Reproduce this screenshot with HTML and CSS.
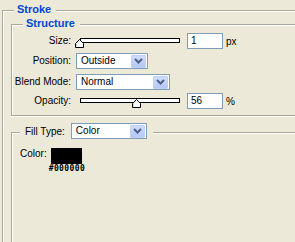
FILE: index.html
```html
<!DOCTYPE html>
<html>
<head>
<meta charset="utf-8">
<link rel="stylesheet" href="styles.css">
</head>
<body>
<div class="group outer">
  <div class="title bold">Stroke</div>
  <div class="group inner structure">
    <div class="title bold">Structure</div>
    <div class="rows">
      <div class="row row-size">
        <span class="lbl">Size:</span>
        <div class="slider">
          <div class="track"></div>
          <svg class="thumb thumb-size" width="9" height="9" viewBox="0 0 9 9"><polygon points="4.5,0.5 8.5,4.5 8.5,8.5 0.5,8.5 0.5,4.5" fill="#fff" stroke="#000" stroke-width="1"/><polyline points="1.5,7.5 1.5,4.9 4.5,1.9" fill="none" stroke="#d4d0c8" stroke-width="1"/></svg>
        </div>
        <div class="num">1</div>
        <span class="unit">px</span>
      </div>
      <div class="row row-pos">
        <span class="lbl">Position:</span>
        <div class="select sel-pos"><span class="val">Outside</span><span class="btn"><svg width="9" height="6" viewBox="0 0 9 6"><polyline points="1,1 4.5,4.5 8,1" fill="none" stroke="#4d6185" stroke-width="2"/></svg></span></div>
      </div>
      <div class="row row-blend">
        <span class="lbl">Blend Mode:</span>
        <div class="select sel-blend"><span class="val">Normal</span><span class="btn"><svg width="9" height="6" viewBox="0 0 9 6"><polyline points="1,1 4.5,4.5 8,1" fill="none" stroke="#4d6185" stroke-width="2"/></svg></span></div>
      </div>
      <div class="row row-opacity">
        <span class="lbl">Opacity:</span>
        <div class="slider">
          <div class="track"></div>
          <svg class="thumb thumb-opacity" width="9" height="9" viewBox="0 0 9 9"><polygon points="4.5,0.5 8.5,4.5 8.5,8.5 0.5,8.5 0.5,4.5" fill="#fff" stroke="#000" stroke-width="1"/><polyline points="1.5,7.5 1.5,4.9 4.5,1.9" fill="none" stroke="#d4d0c8" stroke-width="1"/></svg>
        </div>
        <div class="num">56</div>
        <span class="unit">%</span>
      </div>
    </div>
  </div>
  <div class="group inner fill">
    <div class="title fill-title">
      <span class="fill-lbl">Fill Type:</span>
      <div class="select sel-fill"><span class="val">Color</span><span class="btn"><svg width="9" height="6" viewBox="0 0 9 6"><polyline points="1,1 4.5,4.5 8,1" fill="none" stroke="#4d6185" stroke-width="2"/></svg></span></div>
    </div>
    <div class="color-row">
      <span class="color-lbl">Color:</span>
      <div class="swatch-col">
        <div class="swatch"></div>
        <div class="hex">#000000</div>
      </div>
    </div>
  </div>
</div>
</body>
</html>
```
FILE: styles.css
```css
html, body {
  margin: 0;
  padding: 0;
  background: #ece9d8;
  overflow: hidden;
  width: 295px;
  height: 242px;
}
body {
  font-family: "Liberation Sans", Arial, sans-serif;
  font-size: 10px;
  color: #000;
}
.group {
  border-top: 1px solid #aca899;
  border-left: 1px solid #aca899;
  box-shadow: inset 1px 1px 0 #fff;
}
.outer {
  margin: 10px 0 0 2px;
  width: 292px;
  height: 231px;
}
.title {
  width: fit-content;
  background: #ece9d8;
  position: relative;
}
.bold {
  font-weight: bold;
  font-size: 11px;
  line-height: 13px;
  color: #0046d5;
  margin: -8px 0 0 11px;
  padding: 0 5px 0 3px;
}
.inner {
  margin-left: 8px;
  width: 283px;
}
.structure {
  margin-top: 8px;
  height: 90px;
  border-bottom: 1px solid #aca899;
  box-shadow: inset 1px 1px 0 #fff, 0 1px 0 #fff;
}
.rows {
  display: flex;
  flex-direction: column;
  margin-top: 3px;
}
.row {
  display: flex;
  align-items: center;
  height: 16px;
}
.row-pos { margin-top: 4px; }
.row-blend { margin-top: 5px; }
.row-opacity { margin-top: 3px; }
.lbl {
  width: 59px;
  text-align: right;
  margin-right: 5px;
  line-height: 12px;
}
.slider {
  position: relative;
  width: 104px;
  height: 16px;
}
.track {
  margin: 5px 0 0 4px;
  width: 98px;
  height: 3px;
  border: 1px solid #000;
  background: #fff;
}
.thumb {
  position: absolute;
  top: 6px;
}
.thumb-size { left: -1px; }
.thumb-opacity { left: 56px; }
.num {
  margin-left: 7px;
  width: 31px;
  height: 14px;
  border: 1px solid #7f9db9;
  background: #fff;
  padding-left: 3px;
  line-height: 14px;
  box-sizing: content-box;
}
.unit {
  margin-left: 3px;
}
.select {
  display: flex;
  align-items: center;
  justify-content: space-between;
  height: 14px;
  border: 1px solid #7f9db9;
  background: #fff;
  padding: 0 1px 0 4px;
  line-height: 14px;
}
.sel-pos { width: 65px; }
.sel-blend { width: 87px; }
.sel-fill { width: 69px; }
.btn {
  display: flex;
  align-items: center;
  justify-content: center;
  width: 15px;
  height: 13px;
  background: linear-gradient(#cfdcfb, #b5c9f6);
  border: 1px solid #c0d0f4;
  box-sizing: border-box;
  border-radius: 1px;
}
.fill {
  margin-top: 16px;
  height: 109px;
}
.fill-title {
  display: flex;
  align-items: center;
  margin: -10px 0 0 8px;
  padding: 0 6px 0 5px;
  gap: 6px;
}
.color-row {
  display: flex;
  align-items: flex-start;
  margin: 9px 0 0 8px;
}
.color-lbl {
  line-height: 12px;
  margin-right: 2px;
}
.swatch-col {
  display: flex;
  flex-direction: column;
  align-items: center;
}
.swatch {
  width: 31px;
  height: 16px;
  background: #000;
}
.hex {
  font-family: "DejaVu Sans Mono", monospace;
  font-weight: bold;
  font-size: 8px;
  letter-spacing: 0.4px;
  line-height: 9px;
  margin-top: 0;
}
```
